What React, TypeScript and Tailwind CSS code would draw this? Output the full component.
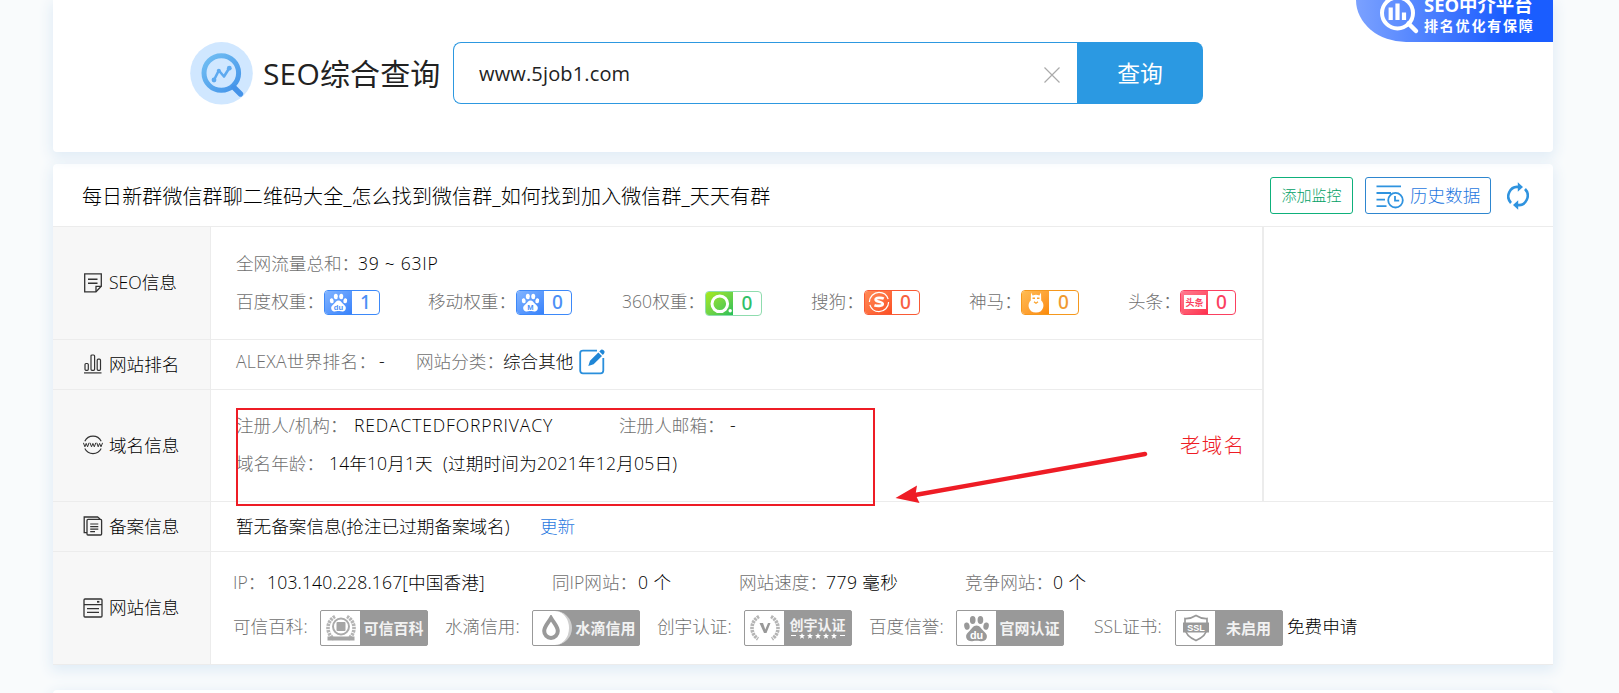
import type { ReactNode } from "react";

const line = "border-[#ececec]";

/* ---------- sidebar icons ---------- */

function NoteIcon() {
  return (
    <svg width="20" height="20" viewBox="0 0 20 20" fill="none" stroke="#333" strokeWidth="1.3">
      <path d="M1.7 0.8H18.3V13.3L13 18.8H1.7Z" />
      <path d="M18.3 13.3H13V18.8" />
      <path d="M5 6.2H14.5M5 10.2H14.5" strokeWidth="1.6" />
    </svg>
  );
}

function BarsIcon() {
  return (
    <svg width="20" height="20" viewBox="0 0 20 20" fill="none" stroke="#333" strokeWidth="1.2">
      <path d="M1 18.9H18.5" />
      <rect x="2" y="9.5" width="3.3" height="6.8" rx="1" />
      <rect x="8" y="1" width="3.6" height="15.3" rx="1" />
      <rect x="14.2" y="5.2" width="3.3" height="11.1" rx="1" />
    </svg>
  );
}

function WwwIcon() {
  return (
    <svg width="20" height="20" viewBox="0 0 20 20" fill="none" stroke="#333" strokeWidth="1.1">
      <path d="M1.8 6.2A9.2 9.2 0 0 1 18.2 6.2" />
      <path d="M1.8 13.6A9.2 9.2 0 0 0 18.2 13.6" />
      <path
        d="M0.4 7.8L1.9 11.8L3.2 8.4L4.6 11.8L6 7.8M7 7.8L8.5 11.8L9.9 8.4L11.3 11.8L12.8 7.8M13.8 7.8L15.2 11.8L16.6 8.4L18 11.8L19.6 7.8"
        strokeWidth="1"
      />
    </svg>
  );
}

function FilesIcon() {
  return (
    <svg width="20" height="20" viewBox="0 0 20 20" fill="none" stroke="#333" strokeWidth="1.3">
      <path d="M4 16.6H1.2V1H14.6L17 3" />
      <rect x="4" y="3.4" width="14.6" height="15.6" rx="1" />
      <path d="M7.2 8H15.3M7.2 10.6H15.3M7.2 13.2H15.3M7.2 15.6H12" strokeWidth="1.2" />
    </svg>
  );
}

function WindowIcon() {
  return (
    <svg width="20" height="20" viewBox="0 0 20 20" fill="none" stroke="#333" strokeWidth="1.3">
      <rect x="1" y="1" width="18" height="18" rx="1" />
      <path d="M1 6.6H19M4 10.6H16M4 14.4H16" />
      <path d="M14 3.8H16.4" strokeWidth="1.8" />
    </svg>
  );
}

/* ---------- brand marks ---------- */

function Paw({ fill, ink, text, size }: { fill: string; ink: string; text: string; size: number }) {
  return (
    <svg width={size} height={size} viewBox="0 0 20 20" fill={fill}>
      <ellipse cx="2.9" cy="8.2" rx="2" ry="2.7" transform="rotate(-12 2.9 8.2)" />
      <ellipse cx="7.2" cy="3.7" rx="2.1" ry="2.9" />
      <ellipse cx="12.9" cy="3.7" rx="2.1" ry="2.9" />
      <ellipse cx="17.1" cy="8.2" rx="2" ry="2.7" transform="rotate(12 17.1 8.2)" />
      <path d="M10 7.8C12.4 7.8 13.3 10 15 11.6C16.9 13.2 18.2 14.8 17.6 16.8C16.9 19.3 14.2 19.7 12.4 19.3C10.8 19 9.2 19 7.6 19.3C5.8 19.7 3.1 19.3 2.4 16.8C1.8 14.8 3.1 13.2 5 11.6C6.7 10 7.6 7.8 10 7.8Z" />
      <text x="10" y="17.6" textAnchor="middle" fill={ink} className="font-['Liberation_Sans',sans-serif] text-[8px] font-bold">
        {text}
      </text>
    </svg>
  );
}

function Weight({
  box,
  mark,
  digit,
  value,
  children,
}: {
  box: string;
  mark: string;
  digit: string;
  value: string;
  children: ReactNode;
}) {
  return (
    <span className={"flex h-[25px] shrink-0 overflow-hidden rounded-[4px] border bg-white " + box}>
      <span className={"flex w-[27px] items-center justify-center bg-linear-to-br " + mark}>{children}</span>
      <span
        className={
          "flex flex-1 items-center justify-center pt-px font-['Noto_Sans',sans-serif] text-[19px] leading-none font-medium " +
          digit
        }
      >
        {value}
      </span>
    </span>
  );
}

function Cert({ icon, children, round }: { icon: ReactNode; children: ReactNode; round?: boolean }) {
  return (
    <span className="flex h-[36px] w-[108px] shrink-0 overflow-hidden rounded-[2px] border border-[#999] bg-[#999]">
      <span
        className={
          "flex w-[39px] shrink-0 items-center justify-center bg-white " +
          (round ? "rounded-r-[18px] border-r-[3px] border-[#cfcfcf]" : "")
        }
      >
        {icon}
      </span>
      <span className="flex flex-1 flex-col items-center justify-center pb-px font-['Noto_Sans_CJK_SC',sans-serif] text-[15px] leading-none font-bold text-[#f2f2f2]">
        {children}
      </span>
    </span>
  );
}

function Laurel({ children }: { children: ReactNode }) {
  return (
    <svg width="30" height="28" viewBox="0 0 30 28" fill="none">
      <path d="M9 2.5A13 13 0 0 0 8 25M21 2.5A13 13 0 0 1 22 25" stroke="#b5b5b5" strokeWidth="3.6" strokeDasharray="2.4 0.8" />
      {children}
    </svg>
  );
}

/* ---------- page pieces ---------- */

function Row({ height, icon, name, children }: { height: string; icon: ReactNode; name: string; children: ReactNode }) {
  return (
    <div className={"flex border-b " + line + " " + height}>
      <div className={"flex w-[158px] shrink-0 items-center border-r bg-[#f7f7f7] pb-px pl-[30px] " + line}>
        {icon}
        <span className="ml-[6px] pb-px text-black">{name}</span>
      </div>
      <div className="flex flex-1 flex-col pl-[25px]">{children}</div>
    </div>
  );
}

function Key({ w, children }: { w: string; children: ReactNode }) {
  return <span className={"shrink-0 pb-[2px] text-[#707070] " + w}>{children}</span>;
}

function Val({ w, children }: { w: string; children: ReactNode }) {
  return <span className={"shrink-0 pb-[2px] text-black " + w}>{children}</span>;
}

function SearchCard() {
  return (
    <section className="relative flex h-[152px] items-start rounded-b-[4px] bg-white pt-[42px] pl-[137px] shadow-[0_4px_14px_2px_#e0ecf6]">
      <svg width="63" height="63" viewBox="0 0 63 63" fill="none">
        <defs>
          <linearGradient id="lens" x1="14" y1="14" x2="50" y2="54" gradientUnits="userSpaceOnUse">
            <stop stopColor="#72bff3" />
            <stop offset="1" stopColor="#3f8fe8" />
          </linearGradient>
        </defs>
        <circle cx="31.5" cy="31.3" r="31.3" fill="#d0e7ff" />
        <circle cx="31.3" cy="31" r="17.3" stroke="url(#lens)" strokeWidth="5" />
        <path d="M44 45.5L50.5 52" stroke="#4593e9" strokeWidth="5.4" strokeLinecap="round" />
        <path d="M24 38L28.8 28.5L34 34.5L39 26.5" stroke="#5eaaf0" strokeWidth="2.6" strokeLinejoin="round" />
        <circle cx="24" cy="38" r="2.4" fill="#5eaaf0" />
        <circle cx="39.3" cy="26.2" r="2.4" fill="#5eaaf0" />
        <circle cx="28.8" cy="28.8" r="2" fill="#5eaaf0" />
      </svg>
      <h1 className="ml-[10px] w-[190px] pt-px text-[30px] leading-[62px] font-normal tracking-[0.15px] text-[#222]">SEO综合查询</h1>
      <div className="flex h-[62px] w-[624px] items-center rounded-l-[8px] border border-r-0 border-[#2d98e0] pl-[25px]">
        <span className="flex-1 pt-[2px] text-[20px] font-normal tracking-[0.15px] text-[#222]">www.5job1.com</span>
        <svg className="mt-[3px] mr-[17px]" width="16" height="16" viewBox="0 0 16 16" stroke="#aaa" strokeWidth="1.2">
          <path d="M0.5 0.5L15.5 15.5M15.5 0.5L0.5 15.5" />
        </svg>
      </div>
      <button className="h-[62px] w-[126px] rounded-r-[8px] bg-[#2b99e2] pt-[2px] text-[22.8px] font-normal text-white">查询</button>

      <div className="absolute top-0 right-0 h-[42px] w-[197px] overflow-hidden rounded-bl-[50px_42px] bg-linear-to-r from-[#7ba1ff] via-[#3b73ff] via-50% to-[#1a5dff] to-75% text-white">
        <svg className="absolute top-0 left-[22px]" width="42" height="36" viewBox="0 0 42 36" fill="none" stroke="#fff">
          <circle cx="19.5" cy="13" r="15.5" strokeWidth="4" />
          <path d="M30.5 23.5L38 31" strokeWidth="4.5" strokeLinecap="round" />
          <path d="M12.7 7.5V20M19.5 3.5V20M26 12.5V20" strokeWidth="4.2" />
        </svg>
        <span className="absolute top-[-9px] left-[68px] text-[18.4px] leading-[28px] font-bold">SEO中介平台</span>
        <span className="absolute top-[16px] left-[68px] text-[14px] leading-[20px] font-bold tracking-[1.8px]">排名优化有保障</span>
      </div>
    </section>
  );
}

function TitleBar() {
  return (
    <header className={"flex h-[63px] items-center border-b pl-[29px] " + line}>
      <h2 className="flex-1 pt-[4px] text-[20px] font-light tracking-[0.1px] text-black">
        每日新群微信群聊二维码大全_怎么找到微信群_如何找到加入微信群_天天有群
      </h2>
      <button className="h-[37px] w-[83px] rounded-[3px] border border-[#0eb07b] text-[15px] text-[#00a065]">添加监控</button>
      <button className="ml-[12px] flex h-[37px] w-[126px] items-center rounded-[3px] border border-[#2e86cf] pl-[10px] text-[#1f78e0]">
        <svg className="mt-[3px] mr-[6px]" width="28" height="24" viewBox="0 0 28 24" fill="none" stroke="#2f93df" strokeWidth="1.8">
          <path d="M0.5 1.4H25M0.5 8H15M0.5 14.6H9M0.5 21.2H10.5" />
          <circle cx="19.5" cy="15.2" r="7.3" />
          <path d="M19 11V15.7H23.2" />
        </svg>
        历史数据
      </button>
      <svg className="mt-[2px] mr-[24px] ml-[16px]" width="22" height="28" viewBox="0 0 22 28" fill="none" stroke="#2f93df" strokeWidth="2.6">
        <path d="M4 21A9 9.4 0 0 1 11.5 5" />
        <path d="M18 7A9 9.4 0 0 1 10.5 23" />
        <path d="M10.8 0.3L16 5L10.8 9.8ZM11.2 18.2L6 23L11.2 27.7Z" fill="#2f93df" stroke="none" />
      </svg>
    </header>
  );
}

function InfoTable() {
  return (
    <>
      <div className="flex">
        <div className="w-[1209px]">
          <Row height="h-[113px]" icon={<NoteIcon />} name="SEO信息">
            <div className="mt-[18px] flex h-[38px] items-center">
              <Key w="w-[122px]">全网流量总和：</Key>
              <Val w="tracking-[0.7px]">39 ~ 63IP</Val>
            </div>
            <div className="flex h-[38px] items-center">
              <Key w="w-[88px]">百度权重：</Key>
              <Weight box="w-[56px] border-[#3d89f9]" mark="from-[#82b4ff] to-[#3681fb]" digit="text-[#4b8ff6]" value="1">
                <Paw fill="#fff" ink="#4b8ff6" text="du" size={19} />
              </Weight>
              <Key w="ml-[48px] w-[88px]">移动权重：</Key>
              <Weight box="w-[56px] border-[#3d89f9]" mark="from-[#82b4ff] to-[#3681fb]" digit="text-[#4b8ff6]" value="0">
                <Paw fill="#fff" ink="#4b8ff6" text="M" size={19} />
              </Weight>
              <Key w="ml-[50px] w-[83px]">360权重：</Key>
              <Weight box="relative top-px w-[57px] border-[#8fdcae]" mark="from-[#a5ea12] to-[#1fbf57]" digit="text-[#30c068]" value="0">
                <svg width="27" height="23" viewBox="0 0 27 23" fill="none">
                  <circle cx="13.8" cy="11.8" r="7.8" stroke="#fff" strokeWidth="3" />
                  <circle cx="24.2" cy="18.8" r="1.7" fill="#fff" />
                </svg>
              </Weight>
              <Key w="ml-[49px] w-[53px]">搜狗：</Key>
              <Weight box="w-[56px] border-[#f95a35]" mark="from-[#ff8a55] to-[#fb4d22]" digit="text-[#f96040]" value="0">
                <svg width="22" height="22" viewBox="0 0 22 22" fill="none" stroke="#fff">
                  <circle cx="11" cy="11" r="9.6" strokeWidth="1.2" strokeDasharray="27 3" />
                  <path d="M15.8 7.6C13.5 6.5 7.6 6.4 7.6 8.7C7.6 11 14.8 10.6 14.8 13C14.8 15.4 8.8 15.2 6.4 14.2" strokeWidth="2.6" />
                </svg>
              </Weight>
              <Key w="ml-[49px] w-[52px]">神马：</Key>
              <Weight box="w-[58px] border-[#f5981d]" mark="from-[#ffbc52] to-[#fb8a00]" digit="text-[#f09a30]" value="0">
                <svg width="18" height="21" viewBox="0 0 18 21" fill="#fff">
                  <path d="M4 0.5L5.6 3.4Q9 2 12.4 3.4L14 0.5L14.2 8.5Q17 11 16.3 15Q15 20.6 9 20.6Q3 20.6 1.7 15Q1 11 3.8 8.5Z" />
                  <path d="M5.5 6.3H8M10 6.3H12.5M7 9.8L9 11.2L11 9.8" stroke="#fba22c" strokeWidth="1.4" />
                </svg>
              </Weight>
              <Key w="ml-[49px] w-[52px]">头条：</Key>
              <Weight box="w-[56px] border-[#fb4060]" mark="from-[#ff7a90] to-[#fd2b4d]" digit="text-[#fb4060]" value="0">
                <span className="flex h-[14px] w-[22px] items-center justify-center bg-white text-[9px] leading-none font-bold text-[#fb4060]">
                  头条
                </span>
              </Weight>
            </div>
          </Row>

          <Row height="h-[50px]" icon={<BarsIcon />} name="网站排名">
            <div className="flex h-[43px] items-center">
              <Key w="w-[143px] tracking-[0.3px]">ALEXA世界排名：</Key>
              <Val w="w-[37px]">-</Val>
              <Key w="w-[87px]">网站分类：</Key>
              <Val w="w-[76px]">综合其他</Val>
              <svg width="26" height="26" viewBox="0 0 26 26" fill="none">
                <path
                  d="M18 1.7H4Q1.2 1.7 1.2 4V21.5Q1.2 24.3 4 24.3H21.5Q24.3 24.3 24.3 21.5V9"
                  stroke="#2a8fdc"
                  strokeWidth="1.8"
                />
                <path
                  d="M9.3 17L11 11.7L19.3 3.4L23 7.1L14.6 15.3ZM20.3 2.4L22 0.8Q23.2 0 24.3 1.1L25.3 2.1Q26 3.2 25.2 4.3L23.9 6Z"
                  fill="#1f86d6"
                />
              </svg>
            </div>
          </Row>

          <Row height="h-[112px]" icon={<WwwIcon />} name="域名信息">
            <div className="mt-[16px] flex h-[39px] items-center">
              <Key w="w-[118px]">注册人/机构：</Key>
              <Val w="w-[265px] tracking-[0.82px]">REDACTEDFORPRIVACY</Val>
              <Key w="w-[111px]">注册人邮箱：</Key>
              <Val w="">-</Val>
            </div>
            <div className="flex h-[38px] items-center">
              <Key w="w-[93px]">域名年龄：</Key>
              <Val w="w-[114px] tracking-[0.1px]">14年10月1天</Val>
              <Val w="tracking-[0.2px]">(过期时间为2021年12月05日)</Val>
            </div>
          </Row>
        </div>
        <div className={"flex-1 border-b border-l-2 " + line} />
      </div>

      <Row height="h-[50px]" icon={<FilesIcon />} name="备案信息">
        <div className="flex h-[50px] items-center">
          <Val w="w-[304px]">暂无备案信息(抢注已过期备案域名)</Val>
          <a className="pb-[2px] text-[#1f78e0]">更新</a>
        </div>
      </Row>

      <Row height="h-[113px]" icon={<WindowIcon />} name="网站信息">
        <div className="mt-[11px] -ml-[3px] flex h-[40px] items-center">
          <Key w="w-[34px]">IP：</Key>
          <Val w="w-[285px] tracking-[0.15px]">103.140.228.167[中国香港]</Val>
          <Key w="w-[86px]">同IP网站：</Key>
          <Val w="w-[101px] tracking-[0.5px]">0 个</Val>
          <Key w="w-[87px]">网站速度：</Key>
          <Val w="w-[139px] tracking-[0.4px]">779 毫秒</Val>
          <Key w="w-[88px]">竞争网站：</Key>
          <Val w="tracking-[0.5px]">0 个</Val>
        </div>
        <div className="mt-[4px] -ml-[3px] flex h-[42px] items-center">
          <Key w="w-[87px] mb-[2px]">可信百科:</Key>
          <Cert
            icon={
              <Laurel>
                <circle cx="15" cy="12.5" r="8" stroke="#aaa" strokeWidth="2" />
                <rect x="10.5" y="8" width="9" height="9" rx="1" fill="#a5a5a5" />
                <path d="M1.5 22.5H28.5V26.5H1.5Z" fill="#a5a5a5" />
              </Laurel>
            }
          >
            可信百科
          </Cert>
          <Key w="mb-[2px] ml-[17px] w-[87px]">水滴信用:</Key>
          <Cert
            round
            icon={
              <svg width="22" height="26" viewBox="0 0 22 26" fill="none">
                <path d="M11 3C14 8 17.8 11.5 17.8 16A6.8 7 0 0 1 4.2 16C4.2 11.5 8 8 11 3Z" stroke="#999" strokeWidth="4" />
              </svg>
            }
          >
            水滴信用
          </Cert>
          <Key w="mb-[2px] ml-[17px] w-[87px]">创宇认证:</Key>
          <Cert
            icon={
              <Laurel>
                <path d="M9.5 9H13L15.3 15.5L18 9H20.5L16.5 19H14Z" fill="#999" />
              </Laurel>
            }
          >
            <span className="text-[14px]">创宇认证</span>
            <span className="mt-[2px] flex items-center gap-[3px]">
              <i className="h-px w-[5px] bg-white" />
              <svg width="38" height="6" viewBox="0 0 38 6" fill="#fff">
                {[3, 11, 19, 27, 35].map((x) => (
                  <path key={x} transform={`translate(${x - 3} 0)`} d="M3 0L3.9 2H6L4.3 3.4L5 5.8L3 4.4L1 5.8L1.7 3.4L0 2H2.1Z" />
                ))}
              </svg>
              <i className="h-px w-[5px] bg-white" />
            </span>
          </Cert>
          <Key w="mb-[2px] ml-[17px] w-[87px]">百度信誉:</Key>
          <Cert icon={<Paw fill="#999" ink="#fff" text="du" size={27} />}>官网认证</Cert>
          <Key w="mb-[2px] ml-[30px] w-[81px]">SSL证书:</Key>
          <Cert
            icon={
              <svg width="28" height="28" viewBox="0 0 28 28" fill="none">
                <path d="M14 1.5Q19 4.8 25 4.5V14Q24.5 22 14 26.5Q3.5 22 3 14V4.5Q9 4.8 14 1.5Z" stroke="#999" strokeWidth="1.7" />
                <path d="M1 8.5H27V18.5H1Z" fill="#999" />
                <text x="14" y="16.8" textAnchor="middle" fill="#fff" className="font-['Liberation_Sans',sans-serif] text-[9px] font-bold">
                  SSL
                </text>
              </svg>
            }
          >
            未启用
          </Cert>
          <Val w="mb-[2px] ml-[4px]">免费申请</Val>
        </div>
      </Row>
    </>
  );
}

function Annotations() {
  return (
    <>
      <div className="absolute top-[408px] left-[236px] h-[98px] w-[639px] border-2 border-[#ee1c25]" />
      <svg className="absolute top-[445px] left-[890px]" width="262" height="62" viewBox="0 0 262 62">
        <path d="M255 9L25 50" stroke="#ee1c25" strokeWidth="4.4" strokeLinecap="round" />
        <path d="M5.5 53L27 40.5L25.5 49.5L29.5 58Z" fill="#ee1c25" />
      </svg>
      <span className="absolute top-[430px] left-[1180px] text-[20.5px] leading-[30px] font-light tracking-[1.3px] text-[#ee1c25]">
        老域名
      </span>
    </>
  );
}

export default function App() {
  return (
    <main className="relative h-[693px] w-[1619px] overflow-hidden bg-[#f9fbfc] font-['Open_Sans','Noto_Sans_CJK_SC',sans-serif] text-[17.6px] leading-[24px] font-light whitespace-nowrap">
      <div className="ml-[53px] flex w-[1500px] flex-col">
        <SearchCard />
        <section className="mt-[12px] h-[501px] rounded-t-[4px] bg-white shadow-[0_4px_14px_2px_#e0ecf6]">
          <TitleBar />
          <InfoTable />
        </section>
        <section className="mt-[25px] h-[40px] rounded-[4px] bg-white shadow-[0_4px_14px_2px_#e0ecf6]" />
      </div>
      <Annotations />
    </main>
  );
}
